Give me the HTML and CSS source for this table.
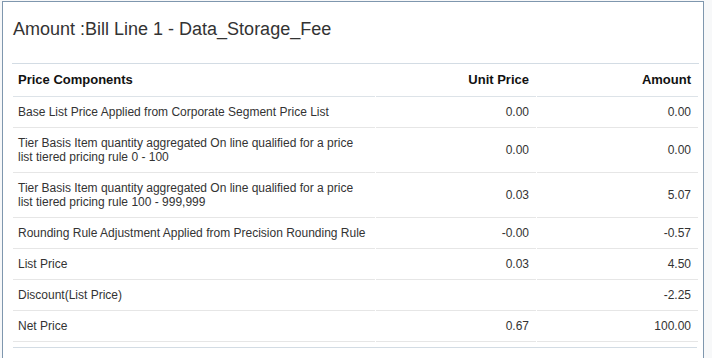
FILE: index.html
```html
<!DOCTYPE html>
<html lang="en">

<head>
  <meta charset="UTF-8">
  <meta name="viewport" content="width=device-width, initial-scale=1.0">
  <title>Price Details</title>
  <link rel="stylesheet" href="styles.css">
</head>

<body>
  <div class="page">
    <!-- price breakdown dialog -->
    <div class="dialog">
      <h2 class="dialog-title">Amount :Bill Line 1 - Data_Storage_Fee</h2>

      <table class="price-table">
        <colgroup>
          <col class="col-name">
          <col class="col-unit">
          <col class="col-amount">
        </colgroup>
        <thead>
          <tr>
            <th>Price Components</th>
            <th class="num">Unit Price</th>
            <th class="num">Amount</th>
          </tr>
        </thead>
        <tbody>
          <tr>
            <td>Base List Price Applied from Corporate Segment Price List</td>
            <td class="num">0.00</td>
            <td class="num">0.00</td>
          </tr>
          <tr>
            <td>Tier Basis Item quantity aggregated On line qualified for a price list tiered pricing rule 0 - 100</td>
            <td class="num">0.00</td>
            <td class="num">0.00</td>
          </tr>
          <tr>
            <td>Tier Basis Item quantity aggregated On line qualified for a price list tiered pricing rule 100 - 999,999</td>
            <td class="num">0.03</td>
            <td class="num">5.07</td>
          </tr>
          <tr>
            <td>Rounding Rule Adjustment Applied from Precision Rounding Rule</td>
            <td class="num">-0.00</td>
            <td class="num">-0.57</td>
          </tr>
          <tr>
            <td>List Price</td>
            <td class="num">0.03</td>
            <td class="num">4.50</td>
          </tr>
          <tr>
            <td>Discount(List Price)</td>
            <td class="num"></td>
            <td class="num">-2.25</td>
          </tr>
          <tr>
            <td>Net Price</td>
            <td class="num">0.67</td>
            <td class="num">100.00</td>
          </tr>
        </tbody>
      </table>

      <div class="table-foot"></div>
    </div>
  </div>
</body>

</html>
```

FILE: styles.css
```css
* {
  margin: 0;
  padding: 0;
  box-sizing: border-box;
}

html,
body {
  height: 100%;
  overflow: hidden;
}

body {
  font-family: 'Liberation Sans', Arial, sans-serif;
  background-color: #f7f8f9;
  color: #333;
}

.page {
  padding: 1px 0 0 2px;
}

/* dialog box */
.dialog {
  width: 702px;
  height: 357px;
  background-color: #fff;
  border: 1px solid #7f97ae;
  border-bottom: none;
  padding: 16px 5px 0 10px;
}

.dialog-title {
  font-size: 18px;
  font-weight: normal;
  line-height: 22px;
  color: #333;
  margin-bottom: 23px;
}

/* price table */
.price-table {
  width: 685px;
  border-collapse: separate;
  border-spacing: 1px 0;
  margin-left: -1px;
  table-layout: fixed;
  border-top: 1px solid #d3dce4;
  font-size: 12px;
  line-height: 14px;
}

.col-name {
  width: 362px;
}

.col-unit {
  width: 160px;
}

.col-amount {
  width: 161px;
}

.price-table th {
  text-align: left;
  font-weight: bold;
  font-size: 13px;
  color: #111;
  padding: 9px 7px 9px 5px;
  border-bottom: 1px solid #dde3e8;
}

.price-table td {
  padding: 8px 7px 8px 5px;
  border-bottom: 1px solid #e6e6e6;
  vertical-align: middle;
}

.price-table .num {
  text-align: right;
}

.table-foot {
  width: 684px;
  margin-top: 5px;
  border-top: 1px solid #d3dce4;
}
```
